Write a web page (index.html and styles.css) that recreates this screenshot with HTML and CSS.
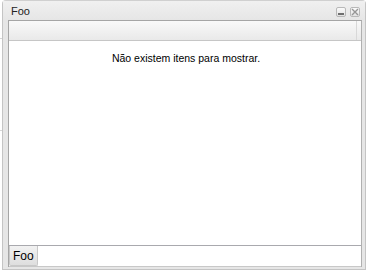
FILE: index.html
```html
<!DOCTYPE html>
<html lang="pt">
<head>
  <meta charset="UTF-8" />
  <title>Foo</title>
  <link rel="stylesheet" href="styles.css">
</head>
<body>
  <div class="desk">
    <div class="window">
      <div class="win-header">
        <span class="win-title">Foo</span>
        <div class="win-tools">
          <span class="tool tool-min"></span>
          <span class="tool tool-close">
            <svg width="8" height="8" viewBox="0 0 8 8"><path d="M1 1 L7 7 M7 1 L1 7" stroke="#959595" stroke-width="1.4"/></svg>
          </span>
        </div>
      </div>
      <div class="win-body">
        <div class="grid-head">
          <div class="col"></div>
          <div class="col-last"></div>
        </div>
        <div class="grid-body">
          <div class="empty-text">Não existem itens para mostrar.</div>
        </div>
        <div class="tab-bar">
          <button class="tab">Foo</button>
        </div>
      </div>
    </div>
  </div>
</body>
</html>
```

FILE: styles.css
```css
body {
  margin: 0;
  background: #fff;
  font-family: 'Liberation Sans', Arial, sans-serif;
}
.desk {
  width: 368px;
  height: 271px;
  overflow: hidden;
  background: #fff;
  background-image:
    linear-gradient(#d6d6d6, #d6d6d6),
    linear-gradient(#d6d6d6, #d6d6d6);
  background-size: 3px 1px, 3px 1px;
  background-position: 0 38px, 0 130px;
  background-repeat: no-repeat;
  padding: 0 2px 0 2px;
  box-sizing: border-box;
}
.window {
  height: 270px;
  background: #e6e6e6;
  border: 1px solid #c4c4c4;
  border-top-color: #d0d0d0;
  border-radius: 4px 4px 0 0;
  box-sizing: border-box;
  display: flex;
  flex-direction: column;
  padding: 0 3px 2px 5px;
}
.win-header {
  height: 19px;
  display: flex;
  align-items: center;
  justify-content: space-between;
  background: linear-gradient(#f0f0f0, #e6e6e6);
  margin: 0 -3px 0 -5px;
  padding: 0 5px 0 8px;
}
.win-title {
  font-size: 11px;
  color: #222;
  padding-top: 1px;
}
.win-tools {
  display: flex;
  gap: 4px;
  padding-top: 3px;
}
.tool {
  width: 8px;
  height: 8px;
  border: 1px solid #b8b8b8;
  border-radius: 2px;
  background: linear-gradient(#fafafa, #e2e2e2);
  display: flex;
  align-items: center;
  justify-content: center;
}
.tool-min::after {
  content: "";
  width: 6px;
  height: 2px;
  background: #6e6e6e;
  margin-top: 3px;
}
.win-body {
  flex: 1;
  display: flex;
  flex-direction: column;
  background: #fff;
  border: 1px solid #a5a5a5;
  border-bottom: none;
  border-right-color: #b0b0b0;
}
.grid-head {
  height: 19px;
  display: flex;
  background: linear-gradient(#f9f9f9, #e9e9e9);
  border-bottom: 1px solid #c6c6c6;
}
.col {
  flex: 1;
  border-right: 1px solid #d8d8d8;
}
.col-last {
  width: 4px;
}
.grid-body {
  flex: 1;
  border-bottom: 1px solid #a9a9ae;
}
.empty-text {
  text-align: center;
  font-size: 10.5px;
  color: #000;
  padding-top: 11px;
  padding-left: 2px;
}
.tab-bar {
  height: 20px;
  display: flex;
  background: #fff;
  border-bottom: 1px solid #c8c8c8;
}
.tab {
  font-family: 'Liberation Sans', Arial, sans-serif;
  font-size: 12px;
  color: #000;
  padding: 0 3px;
  margin: 0;
  border: 1px solid #c8c8c8;
  border-top: none;
  border-radius: 0 0 2px 2px;
  background: linear-gradient(#f2f2f2, #dedede);
  height: 20px;
}
```
